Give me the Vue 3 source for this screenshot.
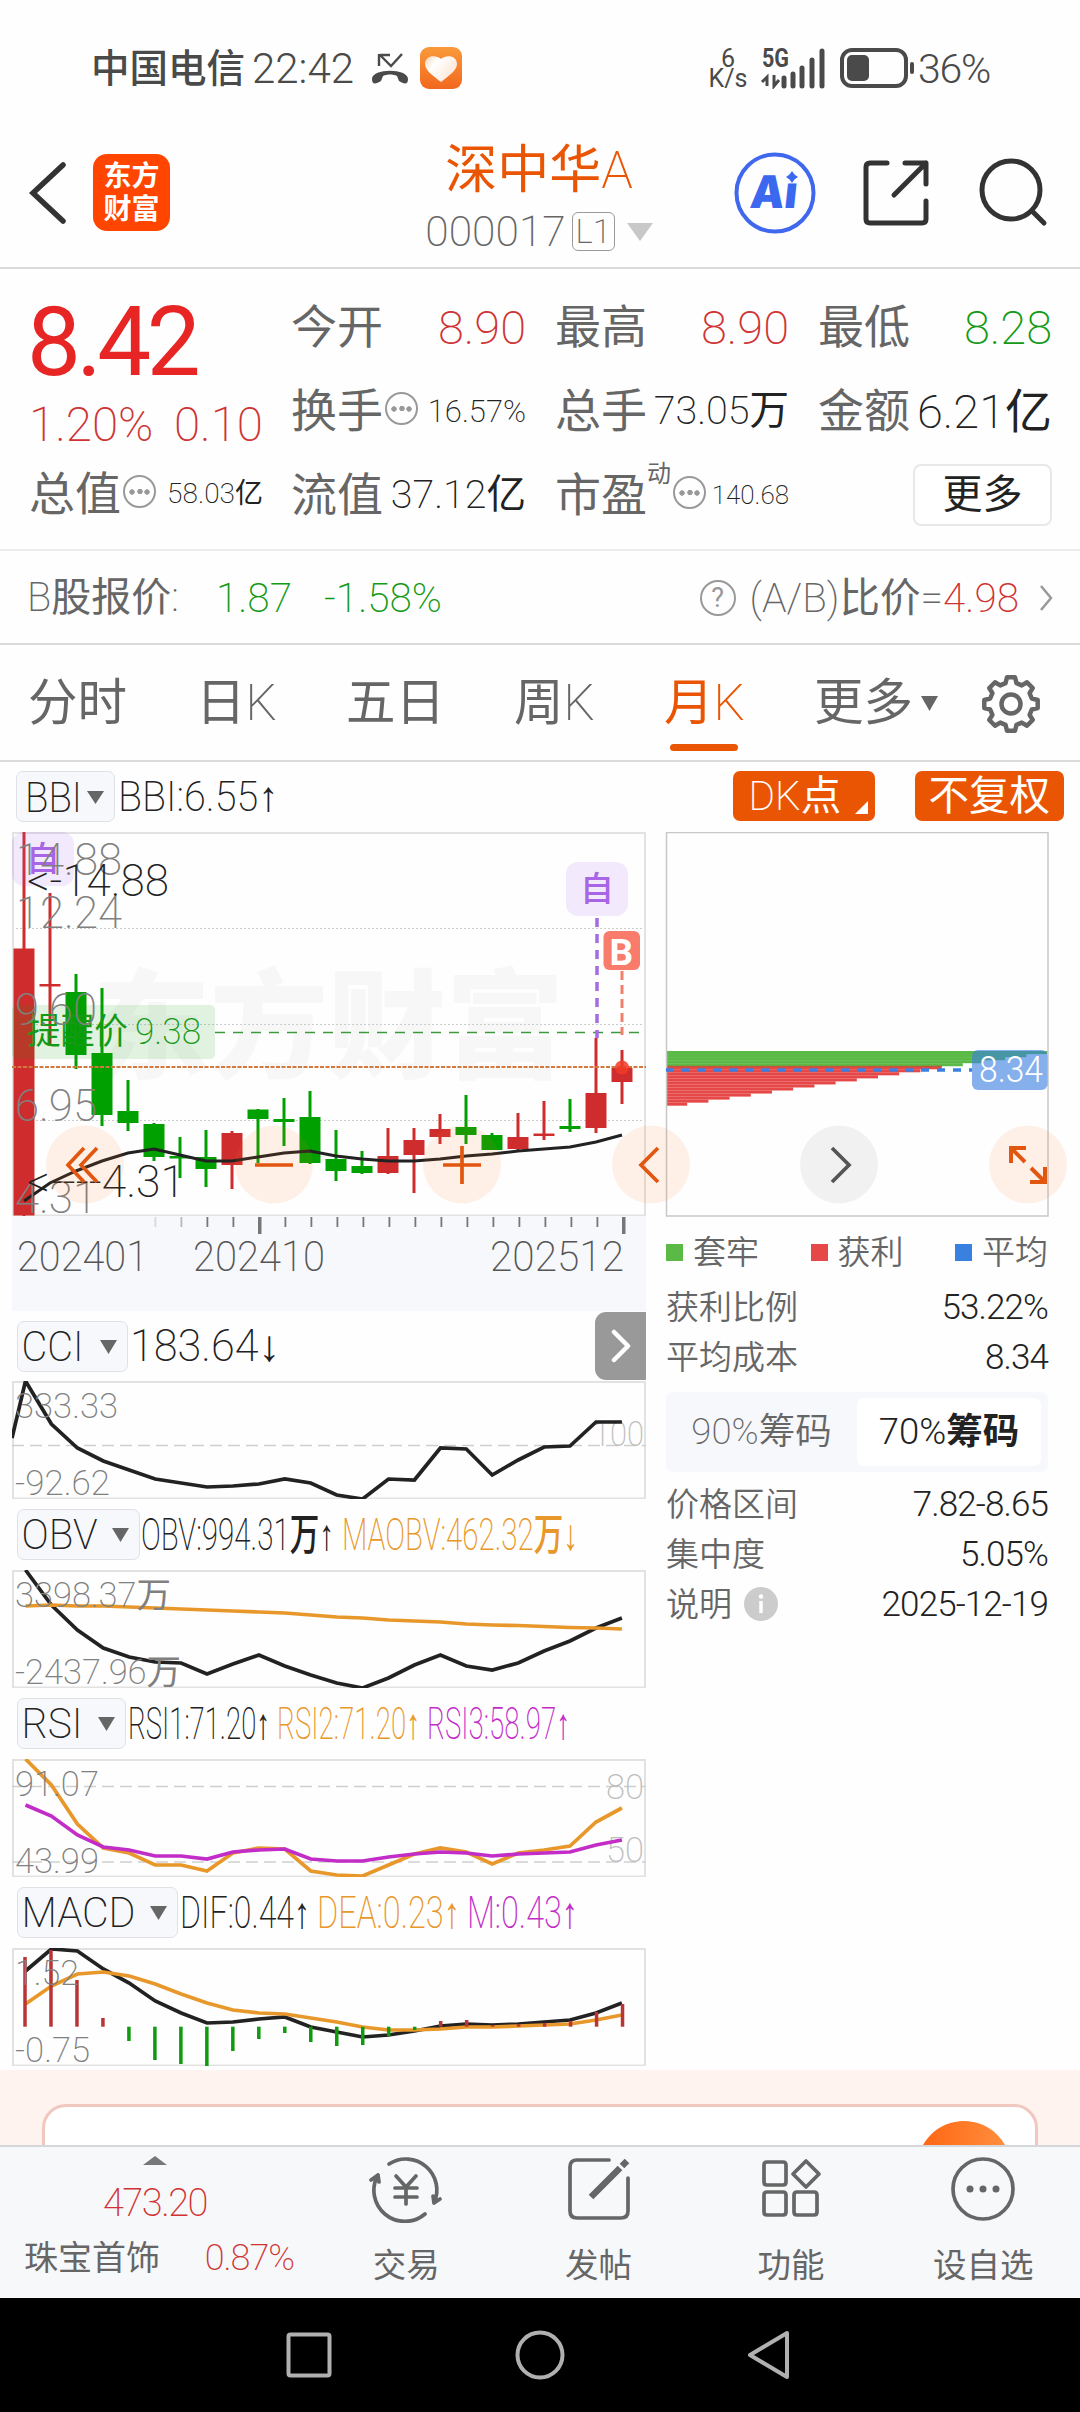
<template>
  <div class="screen">
    <!-- system status bar -->
    <div class="status">
      <span class="carrier">中国电信</span>
      <span class="clock">22:42</span>
      <svg class="missed" width="38" height="32" viewBox="0 0 38 32">
        <path d="M9 2 H19 M8 1 V13 M9 2 L20 13 L31 1" fill="none" stroke="#4a4a4a" stroke-width="2.400" />
        <path d="M1 26 C1 15 37 15 37 26 C37 32 33 31 28 28 L26 23 C22 21 16 21 12 23 L10 28 C5 31 1 32 1 26 Z" fill="#4a4a4a" />
      </svg>
      <svg class="heart" width="42" height="42" viewBox="0 0 42 42">
        <defs>
          <linearGradient id="heartBg" x1="0" y1="0" x2="0" y2="1">
            <stop offset="0" stop-color="#f99a3a" />
            <stop offset="1" stop-color="#f2671f" />
          </linearGradient>
          <linearGradient id="heartFg" x1="0" y1="0" x2="1" y2="0.6">
            <stop offset="0" stop-color="#fbd3b0" />
            <stop offset="0.35" stop-color="#ffffff" />
            <stop offset="1" stop-color="#fce6d6" />
          </linearGradient>
        </defs>
        <rect width="42" height="42" rx="9" fill="url(#heartBg)" />
        <path d="M21 35 C12 28 5 23 5 17 C5 9 15 7 21 12 C27 7 37 9 37 17 C37 23 30 28 21 35 Z" fill="url(#heartFg)" />
      </svg>
      <div class="speed"><span>6</span><span>K/s</span></div>
      <svg class="signal" width="66" height="42" viewBox="760 47 66 42">
        <text x="762" y="67" class="sig5g" textLength="27" lengthAdjust="spacingAndGlyphs">5G</text>
        <path d="M767 86 V77 L762 82 M774 75 V86 L779 80" fill="none" stroke="#4a4a4a" stroke-width="3" />
        <path d="M784 86 V78 M793 86 V74 M802 86 V68 M812 86 V60 M822 86 V51" stroke="#4a4a4a" stroke-width="5" stroke-linecap="round" />
      </svg>
      <svg class="battery" width="76" height="40" viewBox="0 0 76 40">
        <rect x="2" y="2" width="64" height="36" rx="10" fill="none" stroke="#4a4a4a" stroke-width="4" />
        <rect x="7" y="7" width="22" height="26" rx="5" fill="#4a4a4a" />
        <rect x="70" y="14" width="4" height="12" rx="2" fill="#4a4a4a" />
      </svg>
      <span class="percent">36%</span>
    </div>

    <!-- title bar -->
    <header class="header">
      <svg class="back" width="40" height="64" viewBox="0 0 40 64">
        <path d="M35 4 L5 32 L35 60" fill="none" stroke="#333" stroke-width="5.500" stroke-linecap="round" />
      </svg>
      <div class="brand"><span>东方</span><span>财富</span></div>
      <div class="stock">
        <div class="stock-name"><span class="zh">深中华</span>A</div>
        <div class="stock-code">
          <span>000017</span><em>L1</em>
          <svg width="26" height="18" viewBox="0 0 26 18"><path d="M0 0 H26 L13 18 Z" fill="#c8c8c8" /></svg>
        </div>
      </div>
      <svg class="tools" width="340" height="84" viewBox="730 151 340 84" fill="none" stroke="#333" stroke-width="5" stroke-linecap="round">
        <circle cx="775" cy="193" r="38.500" stroke="#4068ee" stroke-width="4" />
        <text x="0" y="0" class="ai" textLength="47" lengthAdjust="spacingAndGlyphs" transform="translate(749 208) skewX(-6)">Aı</text>
        <path d="M792 171 L794.500 174.500 L798 177 L794.500 179.500 L792 183 L789.500 179.500 L786 177 L789.500 174.500 Z" fill="#3c68f0" stroke="none" />
        <path d="M887 163 H870 Q866 163 866 167 V219 Q866 223 870 223 H922 Q926 223 926 219 V201 M905 163 H926 V184 M926 163 L894 195" stroke-linejoin="round" />
        <circle cx="1011" cy="190" r="29" />
        <path d="M1032 211 L1044 223" />
      </svg>
    </header>

    <!-- quote -->
    <section class="quote">
      <div class="main-price">
        <div class="last">8.42</div>
        <div class="change"><span>1.20%</span><span>0.10</span></div>
        <div class="cell">
          <label>总值</label><i class="more-dot"></i><b class="s29">58.03<span class="zh">亿</span></b>
        </div>
      </div>
      <div class="grid">
        <div v-for="c in cells" :key="c.label" class="cell">
          <label>{{ c.label }}</label>
          <sup v-if="c.sup">{{ c.sup }}</sup>
          <i v-if="c.dot" class="more-dot"></i>
          <b :class="[c.size, c.tone]">{{ c.value }}<span v-if="c.unit" class="zh">{{ c.unit }}</span></b>
        </div>
        <div class="cell end"><button class="more-btn">更多</button></div>
      </div>
    </section>

    <!-- B share -->
    <section class="bshare">
      <span class="b-label">B<span class="zh">股报价</span>:</span>
      <span class="green b-price">1.87</span>
      <span class="green b-chg">-1.58%</span>
      <i class="help">?</i>
      <span class="ratio">(A/B)<span class="zh">比价</span>=<b>4.98</b></span>
      <svg width="14" height="26" viewBox="0 0 14 26"><path d="M2 1 L12 13 L2 25" fill="none" stroke="#999" stroke-width="2.500" /></svg>
    </section>

    <!-- period tabs -->
    <nav class="tabs">
      <span v-for="t in tabs" :key="t" :class="{ on: t === active }" @click="active = t">
        <span v-for="r in runs(t)" :key="r.s" :class="{ zh: r.zh }">{{ r.s }}</span>
      </span>
      <span class="tab-more"><span class="zh">更多</span><svg width="17" height="15" viewBox="0 0 17 15"><path d="M0 0 H17 L8.500 15 Z" fill="#666" /></svg></span>
      <svg class="gear" width="60" height="60" viewBox="-30 -30 60 60" fill="none" stroke="#666" stroke-width="4.500">
        <path :d="gear" stroke-linejoin="round" />
        <circle r="9.500" />
      </svg>
    </nav>

    <div class="board">
      <!-- indicator bar above both panels -->
      <div class="bbi-row">
        <div class="pill bbi-pill">
          <svg width="92" height="50" viewBox="18 771 92 50">
            <text x="26" y="811" class="pt" textLength="57" lengthAdjust="spacingAndGlyphs">BBI</text>
            <path d="M88 790 H105 L96.500 803 Z" fill="#666" />
          </svg>
        </div>
        <svg class="bbi-val" width="170" height="60" viewBox="115 766 170 60">
          <text x="118" y="811" class="pt" textLength="160" lengthAdjust="spacingAndGlyphs">BBI:6.55↑</text>
        </svg>
        <div class="tag dk">DK<span>点</span></div>
        <div class="tag"><span>不复权</span></div>
      </div>

      <div class="columns">
        <div class="left">
          <!-- monthly candles -->
          <svg class="chart" width="635" height="384" viewBox="12 832 635 384">
            <text x="92" y="1069" class="mark" textLength="472" lengthAdjust="spacingAndGlyphs">东方财富</text>
            <path d="M12 928.500 H646 M12 1024.500 H646 M12 1120.500 H646" stroke="#ccc" stroke-dasharray="2 2" />
            <rect x="13" y="833" width="632" height="382.500" fill="none" stroke="#e2e2e2" stroke-width="2" />
            <g v-for="(c, i) in candles" :key="i" :fill="c[0] ? '#cf2d2d' : '#00a000'">
              <rect :x="cx(i) - 1.5" :y="c[1]" width="3" :height="c[4] - c[1]" />
              <rect :x="cx(i) - 10.5" :y="c[2]" width="21" :height="c[3] - c[2]" />
            </g>
            <path d="M215 1032.500 H640" stroke="#3c9a3c" stroke-width="1.500" stroke-dasharray="10 8" />
            <path d="M12 1067 H646" stroke="#d2793e" stroke-width="1.800" stroke-dasharray="4 1.500" />
            <polyline :points="line(bbi, 24, 26)" fill="none" stroke="#222" stroke-width="3" />
            <rect x="12" y="1005" width="203" height="54" rx="5" fill="#149c14" fill-opacity="0.12" />
            <text x="27" y="1044" class="remind zh" textLength="101" lengthAdjust="spacingAndGlyphs">提醒价</text>
            <text x="135" y="1044" class="remind" textLength="66" lengthAdjust="spacingAndGlyphs">9.38</text>
            <rect x="12" y="832" width="62" height="54" rx="12" fill="#a05af0" fill-opacity="0.12" />
            <text x="26" y="871" class="zi">自</text>
            <rect x="566" y="862" width="62" height="54" rx="12" fill="#a05af0" fill-opacity="0.12" />
            <text x="580" y="901" class="zi">自</text>
            <path d="M597 918 V1038" stroke="#a56be6" stroke-width="3.500" stroke-dasharray="9 7" />
            <rect x="603.500" y="931" width="36.500" height="39" rx="6" fill="#f97b6c" />
            <text x="609.500" y="964.500" class="buy">B</text>
            <path d="M622 971 V1035" stroke="#f0806c" stroke-width="3" stroke-dasharray="9 5" />
            <circle cx="622" cy="1067.500" r="7" fill="#f23a28" fill-opacity="0.85" />
            <text v-for="t in priceLabels" :key="t[0]" :x="t[1]" :y="t[2]" :textLength="t[3]" lengthAdjust="spacingAndGlyphs" class="ax">{{ t[0] }}</text>
            <text x="27" y="896" class="ax dark" textLength="142" lengthAdjust="spacingAndGlyphs">&lt;-14.88</text>
            <text x="27" y="1197" class="ax dark" textLength="158" lengthAdjust="spacingAndGlyphs">&lt;----4.31</text>
          </svg>
          <svg class="xaxis" width="634" height="95" viewBox="12 1216 634 95">
            <rect x="12" y="1216" width="634" height="95" fill="#f7f8fb" />
            <rect v-for="i in 19" :key="i" :x="tickX(i)" y="1217" :width="bigTick(i) ? 3.500 : 1.800" :height="bigTick(i) ? 17 : 10" fill="#777" :opacity="i < 3 ? 0.25 * i : 1" />
            <text x="17" y="1271" class="date" textLength="131" lengthAdjust="spacingAndGlyphs">202401</text>
            <text x="193" y="1271" class="date" textLength="132" lengthAdjust="spacingAndGlyphs">202410</text>
            <text x="490" y="1271" class="date" textLength="134" lengthAdjust="spacingAndGlyphs">202512</text>
          </svg>

          <!-- sub indicators -->
          <template v-for="p in panels" :key="p.name">
            <div class="ind-head">
              <div class="pill" :style="{ width: p.pill + 'px' }">
                <svg :width="p.pill - 2" height="49" :viewBox="`18 0 ${p.pill - 2} 49`">
                  <text x="21.500" y="39" class="pt" :textLength="p.nameW" lengthAdjust="spacingAndGlyphs">{{ p.name }}</text>
                  <path :d="`M${p.pill - 11} 18 h17 l-8.500 14 Z`" fill="#666" />
                </svg>
              </div>
              <svg class="legend" :width="595 - 17 - p.pill" height="60" :viewBox="`${17 + p.pill} 0 ${595 - 17 - p.pill} 60`">
                <text v-for="l in p.legend" :key="l[0]" :x="l[1]" y="45" :textLength="l[2]" lengthAdjust="spacingAndGlyphs" :fill="l[3]" class="lg"><tspan v-for="r in runs(l[0])" :key="r.s" :class="{ heavy: r.zh }">{{ r.s }}</tspan></text>
              </svg>
              <div v-if="p.name === 'CCI'" class="drawer">
                <svg width="20" height="34" viewBox="0 0 20 34"><path d="M3 3 L17 17 L3 31" fill="none" stroke="#fff" stroke-width="4.500" stroke-linecap="round" stroke-linejoin="round" /></svg>
              </div>
            </div>
            <svg class="chart" width="635" height="118" :viewBox="`12 ${p.top} 635 118`">
              <rect x="13" :y="p.top + 1" width="632" height="116.500" fill="none" stroke="#e2e2e2" stroke-width="2" />
              <path v-for="y in p.dashes" :key="y" :d="`M12 ${y} H646`" stroke="#cfcfcf" stroke-width="1.500" stroke-dasharray="12 6" />
              <text v-for="t in p.right" :key="t[0]" :x="t[1]" :y="t[2]" :textLength="t[3]" lengthAdjust="spacingAndGlyphs" class="sm pale">{{ t[0] }}</text>
              <polyline v-for="s in p.series" :key="s.color" :points="(s.pre || '') + line(s.data, 25.5, 25.93)" fill="none" :stroke="s.color" stroke-width="3.700" />
              <rect
                v-for="(b, i) in p.bars"
                :key="i"
                :x="25 + i * 25.98 - 1.75"
                :y="Math.min(b, 2026.7)"
                width="3.5"
                :height="Math.abs(b - 2026.7)"
                :fill="b < 2026.7 ? '#b93434' : '#0f9a0f'"
              />
              <text v-for="t in p.labels" :key="t[0]" :x="t[1]" :y="t[2]" :textLength="t[3]" lengthAdjust="spacingAndGlyphs" class="sm"><tspan v-for="r in runs(t[0])" :key="r.s" :class="{ zh: r.zh }">{{ r.s }}</tspan></text>
            </svg>
          </template>
        </div>

        <!-- chip distribution -->
        <aside class="chips">
          <svg class="chart" width="384" height="385" viewBox="665 832 384 385">
            <rect
              v-for="k in 18"
              :key="k"
              x="666"
              :y="1051 + (k - 1) * 3.035"
              :width="(19 - k) * 21.2"
              height="3.1"
              :fill="k < 6 ? '#5bb946' : '#e64848'"
            />
            <path d="M666 1066.500 H942" stroke="#c0563a" stroke-width="1.500" />
            <rect x="666.500" y="832.500" width="381.500" height="383.500" fill="none" stroke="#c8c8c8" stroke-width="1.500" />
            <path d="M666 1070 H972" stroke="#3a80e0" stroke-width="3.500" stroke-dasharray="8 8" stroke-dashoffset="1" />
            <rect x="972" y="1050" width="75.500" height="40" rx="6" fill="#3a80e0" fill-opacity="0.62" />
            <text x="979" y="1082" class="avg" textLength="64" lengthAdjust="spacingAndGlyphs">8.34</text>
          </svg>
          <div class="chip-legend">
            <span><i class="bg-green"></i>套牢</span>
            <span><i class="bg-red"></i>获利</span>
            <span><i class="bg-blue"></i>平均</span>
          </div>
          <div class="kv"><span>获利比例</span><b>53.22%</b></div>
          <div class="kv"><span>平均成本</span><b>8.34</b></div>
          <div class="switch"><span>90%<b>筹码</b></span><span class="on">70%<b>筹码</b></span></div>
          <div class="kv"><span>价格区间</span><b>7.82-8.65</b></div>
          <div class="kv"><span>集中度</span><b>5.05%</b></div>
          <div class="kv">
            <span>说明</span>
            <svg class="info" width="34" height="34" viewBox="0 0 34 34">
              <circle cx="17" cy="17" r="17" fill="#ccc" />
              <path d="M17 14 V26" stroke="#fff" stroke-width="3.500" />
              <circle cx="17" cy="9.500" r="2.200" fill="#fff" />
            </svg>
            <b>2025-12-19</b>
          </div>
        </aside>
      </div>

      <!-- floating chart controls -->
      <svg class="float" width="1080" height="80" viewBox="0 1125 1080 80" fill="none" stroke="#e2570f" stroke-width="3.700">
        <g fill="#ff6a1a" fill-opacity="0.1" stroke="none">
          <circle v-for="x in [85, 274, 462, 651, 1028]" :key="x" :cx="x" cy="1164.500" r="39" />
        </g>
        <circle cx="839" cy="1164.500" r="39" fill="#000" fill-opacity="0.05" stroke="none" />
        <path d="M84 1148 L68 1165 L84 1182 M97 1148 L81 1165 L97 1182" />
        <path d="M255 1165 H293 M443 1165 H481 M462 1146 V1184" />
        <path d="M658 1148 L641 1165 L658 1182" />
        <path d="M832 1148 L849 1165 L832 1182" stroke="#555" />
        <path d="M1026 1148 H1011 V1163 M1011 1148 L1025 1162 M1030 1182 H1045 V1167 M1045 1182 L1031 1168" stroke-width="4" />
      </svg>
    </div>

    <div class="promo"><div class="promo-card"><i></i></div></div>

    <!-- bottom actions -->
    <footer class="bottom">
      <div class="index">
        <svg width="24" height="9" viewBox="0 0 24 9"><path d="M0 9 L12 0 L24 9 Z" fill="#777" /></svg>
        <div class="index-val">473.20</div>
        <div class="index-row"><span class="zh">珠宝首饰</span><b>0.87%</b></div>
      </div>
      <div v-for="a in actions" :key="a.name" class="action">
        <svg width="76" height="68" viewBox="-38 -34 76 68" fill="none" stroke="#666" stroke-width="3.700" stroke-linecap="round" stroke-linejoin="round">
          <path v-for="d in a.paths" :key="d" :d="d" />
          <path v-if="a.solid" :d="a.solid" stroke-width="6.500" stroke-linecap="butt" />
          <g v-if="a.dots" fill="#666" stroke="none"><circle v-for="x in a.dots" :key="x" :cx="x" cy="0" r="3.500" /></g>
        </svg>
        <span>{{ a.name }}</span>
      </div>
    </footer>

    <div class="sysnav">
      <svg width="1080" height="114" viewBox="0 2298 1080 114" fill="none" stroke="#b0b0b0" stroke-width="4">
        <rect x="288.500" y="2334.500" width="41" height="41" rx="2" />
        <circle cx="540" cy="2355" r="22.500" />
        <path d="M787 2333 V2377 L750 2355 Z" stroke-linejoin="round" />
      </svg>
    </div>
  </div>
</template>

<script setup>
import { ref } from "vue";

const tabs = ["分时", "日K", "五日", "周K", "月K"];
const active = ref("月K");

const cells = [
  { label: "今开", value: "8.90", size: "s46", tone: "red" },
  { label: "最高", value: "8.90", size: "s46", tone: "red" },
  { label: "最低", value: "8.28", size: "s46", tone: "green" },
  { label: "换手", value: "16.57%", size: "s30", dot: true },
  { label: "总手", value: "73.05", unit: "万", size: "s38" },
  { label: "金额", value: "6.21", unit: "亿", size: "s46" },
  { label: "流值", value: "37.12", unit: "亿", size: "s38" },
  { label: "市盈", value: "140.68", size: "s26", sup: "动", dot: true },
];

// [up, high, top, bottom, low]
const candles = [
  [1, 832, 948.5, 1215.5, 1216],
  [1, 893, 984, 986.5, 1044],
  [0, 974, 992, 1055, 1069],
  [0, 988, 1053, 1115, 1126],
  [0, 1080, 1111, 1123, 1131],
  [0, 1123, 1124, 1157, 1161],
  [0, 1137, 1156, 1158.5, 1178],
  [0, 1130, 1157, 1169, 1187],
  [1, 1131, 1133, 1165, 1189],
  [0, 1109, 1109.5, 1119, 1163],
  [0, 1098, 1119, 1122, 1146],
  [0, 1091, 1117, 1163, 1164],
  [0, 1130, 1159, 1171, 1181],
  [0, 1151, 1166, 1173, 1174],
  [1, 1128, 1156, 1173, 1174],
  [1, 1128, 1140, 1155, 1193],
  [1, 1114, 1129, 1137, 1144],
  [0, 1095, 1127, 1135, 1144],
  [0, 1133, 1135, 1150, 1150],
  [1, 1113, 1137, 1149, 1150],
  [1, 1101, 1133.5, 1136, 1140],
  [0, 1099, 1126, 1129, 1132],
  [1, 1038, 1093, 1128, 1133],
  [1, 1050, 1068, 1082, 1104],
];
const bbi = [
  1201, 1183, 1171, 1161, 1153, 1149, 1155, 1161, 1161, 1157, 1153, 1151,
  1156, 1159, 1161, 1161, 1159, 1156, 1154, 1151, 1149, 1147, 1142, 1135,
];
const priceLabels = [
  ["14.88", 16, 875, 106],
  ["12.24", 16, 928, 106],
  ["9.60", 15, 1025, 82],
  ["6.95", 15, 1121, 82],
  ["4.31", 15, 1213, 82],
];

const BLACK = "#222";
const GOLD = "#e8982a";
const PURPLE = "#c22dc8";

const panels = [
  {
    name: "CCI",
    top: 1381,
    pill: 111,
    nameW: 62,
    legend: [["183.64↓", 130, 150, BLACK]],
    dashes: [1445.5],
    right: [["100", 593, 1446, 51]],
    series: [
      {
        color: BLACK,
        pre: "12,1438 ",
        data: [1381, 1424, 1448, 1461, 1470, 1479, 1483, 1487, 1486, 1484, 1479, 1483, 1495, 1499, 1479, 1480, 1448, 1449, 1475, 1460, 1447, 1446, 1422, 1422],
      },
    ],
    labels: [["333.33", 15, 1418, 103], ["-92.62", 15, 1495, 95]],
  },
  {
    name: "OBV",
    top: 1570,
    pill: 123,
    nameW: 76,
    legend: [["OBV:994.31万↑", 141, 193, BLACK], ["MAOBV:462.32万↓", 342, 236, GOLD]],
    dashes: [],
    right: [],
    series: [
      {
        color: BLACK,
        data: [1570, 1605, 1630, 1648, 1657, 1662, 1663, 1674, 1664, 1655, 1666, 1675, 1683, 1688, 1678, 1665, 1655, 1666, 1670, 1663, 1651, 1641, 1628, 1618],
      },
      {
        color: GOLD,
        data: [1606, 1605, 1606, 1606, 1607, 1608, 1609, 1610, 1611, 1612, 1613, 1615, 1617, 1618, 1620, 1621, 1622, 1624, 1625, 1625.5, 1626.5, 1627.5, 1628, 1629],
      },
    ],
    labels: [["3398.37万", 15, 1607, 156], ["-2437.96万", 15, 1684, 166]],
  },
  {
    name: "RSI",
    top: 1759,
    pill: 109,
    nameW: 61,
    legend: [["RSI1:71.20↑", 128, 142, BLACK], ["RSI2:71.20↑", 277, 143, GOLD], ["RSI3:58.97↑", 427, 143, PURPLE]],
    dashes: [1786.5, 1862],
    right: [["80", 606, 1799, 38], ["50", 606, 1862, 38]],
    series: [
      {
        color: GOLD,
        data: [1759, 1785, 1824, 1848, 1853, 1865, 1865, 1871, 1853, 1848, 1849, 1871, 1875, 1876, 1865, 1854, 1848, 1852, 1864, 1853, 1850, 1846, 1822, 1808],
      },
      {
        color: PURPLE,
        data: [1805, 1816, 1835, 1847, 1850, 1856, 1856, 1859, 1852, 1850, 1849, 1859, 1861, 1861, 1857, 1854, 1852, 1853, 1856, 1854, 1853, 1852, 1845, 1840],
      },
    ],
    labels: [["91.07", 15, 1796, 84], ["43.99", 15, 1873, 84]],
  },
  {
    name: "MACD",
    top: 1948,
    pill: 161,
    nameW: 114,
    legend: [["DIF:0.44↑", 180, 130, BLACK], ["DEA:0.23↑", 317, 143, GOLD], ["M:0.43↑", 467, 111, PURPLE]],
    dashes: [],
    right: [],
    series: [
      {
        color: BLACK,
        data: [1971, 1949, 1951, 1969, 1983, 2001, 2013, 2023, 2022, 2019, 2017, 2027, 2032, 2037, 2035, 2031, 2026, 2024, 2025, 2024, 2022, 2020, 2013, 2003],
      },
      {
        color: GOLD,
        data: [2004, 1986, 1974, 1972, 1976, 1984, 1994, 2003, 2010, 2013, 2014, 2018, 2022, 2027, 2030, 2030, 2029, 2027, 2027, 2026, 2025, 2024, 2020, 2015],
      },
    ],
    bars: [1957, 1950, 1980, 2018, 2041, 2060, 2064, 2066, 2051, 2039, 2033, 2042, 2046, 2045, 2036, 2030, 2021, 2020, 2025, 2024, 2023, 2021, 2012, 2004],
    labels: [["1.52", 15, 1985, 64], ["-0.75", 15, 2062, 75]],
  },
];

const actions = [
  {
    name: "交易",
    paths: [
      "M-17 -25 A31 31 0 0 1 28 14 M28 14 L34 10 M28 14 L27 7",
      "M19 25 A31 31 0 0 1 -28 -14 M-28 -14 L-35 -9 M-28 -14 L-27 -7",
      "M-10 -13 L0 -2 L10 -13 M0 -2 V15 M-11 -1 H11 M-11 8 H11",
    ],
  },
  {
    name: "发帖",
    paths: ["M10 -29 H-22 Q-29 -29 -29 -22 V22 Q-29 29 -22 29 H22 Q29 29 29 22 V-11"],
    solid: "M-8 8 L21 -21 M23 -23 L28 -28",
  },
  {
    name: "功能",
    paths: [
      "M-24 -27 H-8 Q-5 -27 -5 -24 V-7 Q-5 -4 -8 -4 H-24 Q-27 -4 -27 -7 V-24 Q-27 -27 -24 -27 Z",
      "M15 -28 L28 -15 L15 -2 L2 -15 Z",
      "M-24 3 H-8 Q-5 3 -5 6 V23 Q-5 26 -8 26 H-24 Q-27 26 -27 23 V6 Q-27 3 -24 3 Z",
      "M6 3 H23 Q26 3 26 6 V23 Q26 26 23 26 H6 Q3 26 3 23 V6 Q3 3 6 3 Z",
    ],
  },
  {
    name: "设自选",
    paths: ["M-30 0 A30 30 0 1 1 30 0 A30 30 0 1 1 -30 0"],
    dots: [-13, 0, 13],
  },
];

const cx = (i) => 24 + i * 26;

// split a label into Chinese and Latin runs, they use different weights
function runs(text) {
  return text
    .split(/([\u4e00-\u9fff]+)/)
    .filter(Boolean)
    .map((s) => ({ s, zh: /[\u4e00-\u9fff]/.test(s) }));
}

function line(data, x0, step) {
  return data.map((y, i) => `${(x0 + i * step).toFixed(1)},${y}`).join(" ");
}

const bigTick = (i) => i === 5 || i === 19;
const tickX = (i) => 154.5 + (i - 1) * 26 - (bigTick(i) ? 0.5 : 0);

// gear outline with eight teeth, wide at the base
const gear = (() => {
  const pts = [];
  for (let k = 0; k < 8; k++) {
    const a = (k * Math.PI) / 4;
    [[-0.26, 21.5], [-0.15, 27], [0.15, 27], [0.26, 21.5]].forEach(([o, r]) => {
      pts.push(`${(Math.sin(a + o) * r).toFixed(1)} ${(-Math.cos(a + o) * r).toFixed(1)}`);
    });
  }
  return `M${pts.join(" L")} Z`;
})();
</script>

<style>
body {
  margin: 0;
  background: #fff;
}
</style>

<style scoped>
.screen {
  width: 1080px;
  height: 2412px;
  overflow: hidden;
  display: flex;
  flex-direction: column;
  background: #fefefe;
  color: #222;
  font-family: Roboto, "Liberation Sans", "Noto Sans CJK SC", sans-serif;
  font-weight: 200;
  line-height: 1;
}
.screen svg {
  display: block;
  flex: none;
}
svg text {
  font-family: Roboto, "Liberation Sans", "Noto Sans CJK SC", sans-serif;
}
b,
em,
i {
  font-weight: inherit;
  font-style: normal;
}
.zh {
  font-weight: 400;
}
.heavy {
  font-weight: 500;
}
.red {
  color: #cf3434;
}
.green {
  color: #149a14;
}

/* status bar */
.status {
  height: 134px;
  flex: none;
  display: flex;
  align-items: center;
  padding: 4px 0 0 91px;
  box-sizing: border-box;
  color: #4a4a4a;
}
.carrier {
  width: 161px;
  font-size: 38.5px;
  font-weight: 500;
}
.clock {
  width: 119px;
  font-size: 42px;
  font-weight: 300;
}
.missed {
  margin-right: 11px;
}
.heart {
  margin-top: -2px;
}
.speed {
  width: 40px;
  margin-left: 246px;
  display: flex;
  flex-direction: column;
  align-items: center;
  font-size: 25px;
  line-height: 20px;
  font-weight: 400;
}
.signal {
  margin-left: 12px;
  margin-top: -2px;
}
.sig5g {
  font-size: 25px;
  font-weight: 700;
  fill: #4a4a4a;
}
.battery {
  margin-left: 14px;
  margin-top: -2px;
}
.percent {
  margin-left: 2px;
  font-size: 41px;
  font-weight: 300;
  letter-spacing: -1.2px;
}

/* title bar */
.header {
  height: 135px;
  flex: none;
  display: flex;
  align-items: center;
  padding-bottom: 16px;
  box-sizing: border-box;
  border-bottom: 2px solid #dadada;
}
.back {
  margin-left: 28px;
}
.brand {
  width: 77px;
  height: 77px;
  margin-left: 25px;
  border-radius: 14px;
  background: #ff4500;
  color: #fff;
  display: flex;
  flex-direction: column;
  align-items: center;
  justify-content: center;
  font-size: 28px;
  line-height: 33px;
  font-weight: 700;
}
.stock {
  width: 400px;
  margin-left: 169px;
  padding-top: 14px;
  display: flex;
  flex-direction: column;
  align-items: center;
}
.stock-name {
  font-size: 52px;
  line-height: 64px;
  color: #ea5504;
}
.stock-code {
  display: flex;
  align-items: center;
  font-size: 42.5px;
  line-height: 58px;
  color: #666;
}
.stock-code em {
  width: 41px;
  height: 37px;
  margin: 0 12px 0 6px;
  border: 1.5px solid #999;
  border-radius: 6px;
  font-size: 33px;
  line-height: 38px;
  text-align: center;
}
.tools {
  margin-left: -9px;
}
.ai {
  font-family: Inter, sans-serif;
  font-size: 45px;
  font-weight: 900;
  fill: #3c68f0;
  stroke: none;
}

/* quote */
.quote {
  height: 282px;
  flex: none;
  display: flex;
  padding: 16px 0 0 29px;
  box-sizing: border-box;
  border-bottom: 2px solid #ececec;
}
.main-price {
  width: 234px;
  margin-right: 28px;
}
.last {
  height: 114px;
  font-size: 96px;
  line-height: 114px;
  font-weight: 400;
  letter-spacing: -4.5px;
  text-indent: -2px;
  color: #e82525;
}
.change {
  height: 53px;
  display: flex;
  justify-content: space-between;
  font-size: 47.5px;
  line-height: 53px;
  color: #cf3434;
}
.grid {
  display: grid;
  grid-template-columns: 235px 234px 234px;
  grid-auto-rows: 84px;
  column-gap: 29px;
}
.cell {
  height: 84px;
  display: flex;
  align-items: center;
}
.cell label {
  font-size: 46px;
  font-weight: 400;
  color: #666;
}
.cell b {
  margin-left: auto;
  white-space: nowrap;
}
.cell sup {
  align-self: flex-start;
  margin-top: 7px;
  font-size: 24px;
  line-height: 28px;
  font-weight: 400;
  color: #666;
}
.cell.end {
  justify-content: flex-end;
}
.s46 {
  font-size: 47px;
}
.s38 {
  font-size: 39.5px;
}
.s30 {
  font-size: 31px;
}
.s29 {
  font-size: 28px;
}
.s26 {
  font-size: 26px;
}
.more-dot {
  width: 29px;
  height: 29px;
  margin: -5px 0 0 2px;
  border: 2.5px solid #999;
  border-radius: 50%;
  background: radial-gradient(circle, #999 2.4px, transparent 3px) center / 8px 100% no-repeat,
    radial-gradient(circle, #999 2.4px, transparent 3px) 3px 50% / 8px 8px no-repeat,
    radial-gradient(circle, #999 2.4px, transparent 3px) 18px 50% / 8px 8px no-repeat;
}
.more-btn {
  width: 139px;
  height: 62px;
  padding: 0;
  border: 2px solid #e8e8e8;
  border-radius: 8px;
  background: #fff;
  color: #222;
  font: inherit;
  font-size: 40px;
  font-weight: 400;
}

/* B share */
.bshare {
  height: 94px;
  flex: none;
  display: flex;
  align-items: center;
  padding: 2px 0 0 27px;
  box-sizing: border-box;
  border-bottom: 2px solid #dadada;
  font-size: 40.5px;
  color: #666;
}
.b-label {
  width: 189px;
  font-size: 40px;
}
.b-price {
  width: 108px;
}
.help {
  width: 32px;
  height: 32px;
  margin-left: auto;
  border: 2.5px solid #999;
  border-radius: 50%;
  font-size: 27px;
  line-height: 33px;
  font-weight: 400;
  text-align: center;
  color: #999;
}
.ratio {
  margin: 0 20px 0 14px;
}
.ratio b {
  color: #cf3434;
}
.bshare svg {
  margin-right: 27px;
}

/* tabs */
.tabs {
  height: 117px;
  flex: none;
  display: flex;
  align-items: center;
  justify-content: space-between;
  padding: 2px 39px 0 28px;
  box-sizing: border-box;
  border-bottom: 2px solid #dadada;
  font-size: 49.5px;
  color: #666;
}
.tabs > span {
  position: relative;
  display: flex;
}
.tabs .on {
  color: #ea5504;
}
.tabs .on::after {
  content: "";
  position: absolute;
  left: 6px;
  top: 65px;
  width: 68px;
  height: 7px;
  border-radius: 4px;
  background: #ea5504;
}
.tabs .tab-more {
  align-items: center;
  gap: 8px;
}
.gear {
  margin-left: -26px;
}

/* board */
.board {
  position: relative;
  height: 1308px;
  flex: none;
}
.bbi-row {
  height: 70px;
  display: flex;
  align-items: center;
  padding: 0 16px 2px 16px;
  box-sizing: border-box;
}
.pill {
  height: 51px;
  box-sizing: border-box;
  border: 1.5px solid #dfe1e6;
  border-radius: 7px;
  background: #f7f8fb;
}
.bbi-pill {
  width: 99px;
}
.pt {
  font-size: 42px;
  fill: #222;
}
.tag {
  height: 50px;
  padding: 0 14px;
  border-radius: 7px;
  background: #ea5504;
  color: #fff;
  font-size: 40.5px;
  line-height: 50px;
}
.tag span {
  font-weight: 400;
}
.tag.dk {
  position: relative;
  width: 126px;
  padding-right: 0;
  padding-left: 16px;
  margin-left: auto;
  margin-right: 40px;
}
.dk::after {
  content: "";
  position: absolute;
  right: 7px;
  bottom: 7px;
  border-left: 13px solid transparent;
  border-bottom: 13px solid #fff;
}
.columns {
  display: flex;
}
.left {
  width: 635px;
  margin-left: 12px;
}
.mark {
  font-size: 118px;
  font-weight: 900;
  fill: #f7f7f7;
}
.ax {
  font-size: 44px;
  fill: #808080;
}
.dark {
  fill: #222;
}
.remind {
  font-size: 36px;
  fill: #149a14;
}
.zi {
  font-size: 34px;
  fill: #a865e6;
  font-weight: 500;
}
.buy {
  font-size: 37px;
  font-weight: 700;
  fill: #fff;
}
.date {
  font-size: 42px;
  fill: #555;
}
.ind-head {
  height: 70px;
  padding-left: 5px;
  display: flex;
  align-items: center;
  box-sizing: border-box;
}
.ind-head + .chart + .ind-head {
  height: 71px;
}
.lg {
  font-size: 43.5px;
}
.sm {
  font-size: 34.5px;
  fill: #808080;
}
.pale {
  fill: #bdbdbd;
}
.drawer {
  width: 51px;
  height: 68px;
  margin-left: auto;
  margin-right: 1px;
  border-radius: 11px 0 0 11px;
  background: #999;
  display: flex;
  align-items: center;
  justify-content: center;
}

/* chips */
.chips {
  width: 384px;
  margin-left: 18px;
  font-weight: 400;
}
.avg {
  font-size: 36px;
  font-weight: 300;
  fill: #fff;
}
.chip-legend {
  height: 62px;
  padding: 3px 1px 0;
  display: flex;
  align-items: center;
  justify-content: space-between;
  box-sizing: border-box;
  margin-top: 3px;
  font-size: 33px;
  font-weight: 350;
  color: #666;
}
.chip-legend span {
  display: flex;
  align-items: center;
}
.chip-legend i {
  width: 17px;
  height: 17px;
  margin-right: 10px;
}
.bg-green {
  background: #5bb946;
}
.bg-red {
  background: #e64848;
}
.bg-blue {
  background: #3a80e0;
}
.kv {
  height: 50px;
  display: flex;
  align-items: center;
  padding: 0 1px 0 1px;
  font-size: 33px;
  font-weight: 350;
  color: #666;
}
.kv b {
  margin-left: auto;
  font-size: 35px;
  font-weight: 300;
  letter-spacing: -0.9px;
  color: #222;
}
.info {
  margin-left: 12px;
}
.switch {
  width: 382px;
  height: 80px;
  margin: 10px 0 7px 1px;
  padding: 6px 7px 6px 0;
  box-sizing: border-box;
  display: flex;
  border-radius: 7px;
  background: #f7f8fb;
  font-size: 36.5px;
  line-height: 67px;
  font-weight: 200;
  color: #666;
}
.switch span {
  flex: 1;
  text-align: center;
}
.switch b {
  font-weight: 350;
}
.switch .on {
  flex: none;
  width: 184px;
  border-radius: 7px;
  background: #fff;
  color: #222;
  font-weight: 300;
}
.switch .on b {
  font-weight: 600;
}
.float {
  position: absolute;
  left: 0;
  top: 363px;
}

/* promo */
.promo {
  height: 75px;
  flex: none;
  padding: 34px 42px 0;
  box-sizing: border-box;
  overflow: hidden;
  background: #fef3ef;
}
.promo-card {
  height: 100px;
  padding: 14px 34px 0 0;
  border: 3px solid #f1c8bf;
  border-radius: 24px;
  box-sizing: border-box;
  background: #fff;
  overflow: hidden;
}
.promo-card i {
  display: block;
  width: 94px;
  height: 94px;
  margin-left: auto;
  margin-right: -10px;
  border-radius: 50%;
  background: linear-gradient(90deg, #ff6410, #ff9140);
}

/* bottom actions */
.bottom {
  height: 153px;
  flex: none;
  display: flex;
  box-sizing: border-box;
  border-top: 2px solid #d5d7da;
  background: #f7f8fa;
  color: #666;
}
.index {
  width: 310px;
  display: flex;
  flex-direction: column;
  align-items: center;
  padding-top: 9px;
  box-sizing: border-box;
}
.index-val {
  margin-top: 18px;
  font-size: 38px;
  line-height: 40px;
  letter-spacing: -1.5px;
  color: #cf3434;
}
.index-row {
  width: 270px;
  margin-top: 16px;
  padding-left: 8px;
  box-sizing: content-box;
  display: flex;
  justify-content: space-between;
  font-size: 34px;
  line-height: 38px;
}
.index-row b {
  font-size: 36px;
  letter-spacing: -1px;
  color: #cf3434;
}
.action {
  width: 192.4px;
  display: flex;
  flex-direction: column;
  align-items: center;
  padding-top: 8px;
  box-sizing: border-box;
}
.action span {
  margin-top: 24px;
  font-size: 33.5px;
  line-height: 38px;
  font-weight: 400;
}
.sysnav {
  height: 114px;
  flex: none;
  background: #000;
}
</style>
